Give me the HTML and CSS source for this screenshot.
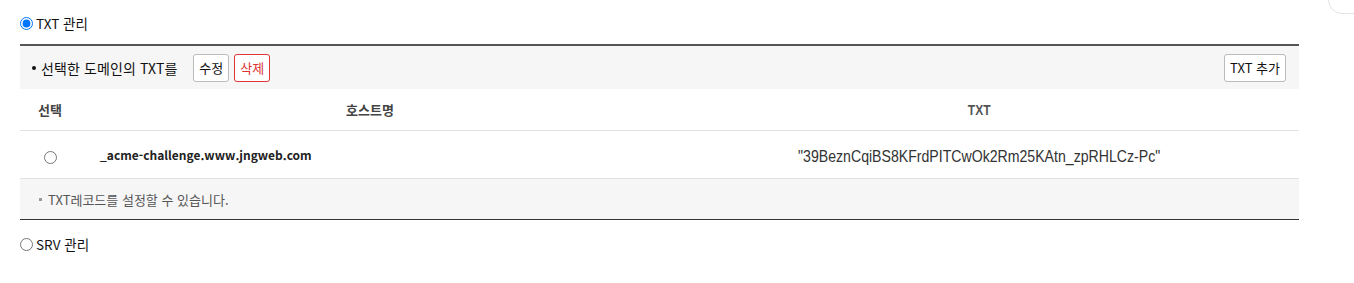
FILE: index.html
```html
<!DOCTYPE html>
<html lang="ko">
<head>
<meta charset="utf-8">
<link rel="stylesheet" href="styles.css">
</head>
<body>
<div class="corner"></div>
<div class="page">
  <label class="opt"><input type="radio" name="sec" checked> <span>TXT 관리</span></label>
  <div class="panel">
    <div class="bar">
      <div class="bar-left">
        <span class="dot"></span>
        <span class="bar-title">선택한 도메인의 TXT를</span>
        <button class="btn">수정</button>
        <button class="btn red">삭제</button>
      </div>
      <button class="btn">TXT 추가</button>
    </div>
    <div class="row head">
      <div class="c1">선택</div>
      <div class="c2">호스트명</div>
      <div class="c3"><span class="narrow">TXT</span></div>
    </div>
    <div class="row data">
      <div class="c1"><span class="radio"></span></div>
      <div class="c2 host">_acme-challenge.www.jngweb.com</div>
      <div class="c3"><span class="val">"39BeznCqiBS8KFrdPITCwOk2Rm25KAtn_zpRHLCz-Pc"</span></div>
    </div>
    <div class="foot"><span class="sq"></span>TXT레코드를 설정할 수 있습니다.</div>
  </div>
  <label class="opt srv"><input type="radio" name="sec"> <span>SRV 관리</span></label>
</div>
</body>
</html>
```
FILE: styles.css
```css
html, body { margin: 0; padding: 0; background: #fff; }
body { font-family: "Noto Sans CJK KR", "Noto Sans", sans-serif; color: #111; }
.page { padding: 12px 55px 0 20px; }
.corner { position: absolute; top: -20px; right: -20px; width: 44px; height: 32px; border: 1px solid #e4e4e4; border-radius: 14px; }
.opt { display: flex; align-items: center; height: 22px; font-size: 13.5px; color: #111; }
.opt input { margin: 0 3px 0 0; width: 13px; height: 13px; }
.panel { margin-top: 10px; border-top: 2px solid #555; border-bottom: 1px solid #333; width: 1279px; }
.bar { background: #f6f6f6; height: 43px; display: flex; align-items: center; justify-content: space-between; padding: 0 13px 0 12px; }
.bar-left { display: flex; align-items: center; }
.dot { width: 4px; height: 4px; background: #111; border-radius: 50%; margin-right: 5px; }
.bar-title { font-size: 14px; margin-right: 16px; letter-spacing: 0.1px; }
.btn { font-family: inherit; font-size: 13px; height: 28px; padding: 0 5px; background: #fff; border: 1px solid #bbb; border-radius: 3px; color: #111; margin-right: 5px; }
.bar > .btn { margin-right: 0; }
.btn.red { border-color: #d33; color: #d33; }
.row { display: flex; align-items: center; }
.c1 { width: 60px; text-align: center; }
.c2 { width: 580px; text-align: center; }
.c3 { flex: 1; text-align: center; }
.head { height: 41px; border-bottom: 1px solid #e2e2e2; font-size: 13px; font-weight: 700; color: #444; }
.narrow { display: inline-block; font-family: "Liberation Sans", Arial, sans-serif; font-size: 14px; font-weight: 700; color: #555; transform: scaleX(0.86); }
.data { height: 47px; border-bottom: 1px solid #e2e2e2; }
.radio { display: inline-block; width: 11px; height: 11px; border: 1px solid #777; border-radius: 50%; vertical-align: middle; }
.host { text-align: left; padding-left: 20px; font-size: 12px; font-weight: 700; color: #222; }
.val { display: inline-block; margin-right: 20px; font-family: "Liberation Sans", Arial, sans-serif; font-size: 17px; color: #333; transform: scaleX(0.83); white-space: nowrap; }
.foot { background: #f6f6f6; height: 40px; display: flex; align-items: center; padding-left: 19px; font-size: 13px; color: #555; }
.sq { width: 3px; height: 3px; background: #999; margin-right: 6px; }
.srv { margin-top: 13px; }
```
